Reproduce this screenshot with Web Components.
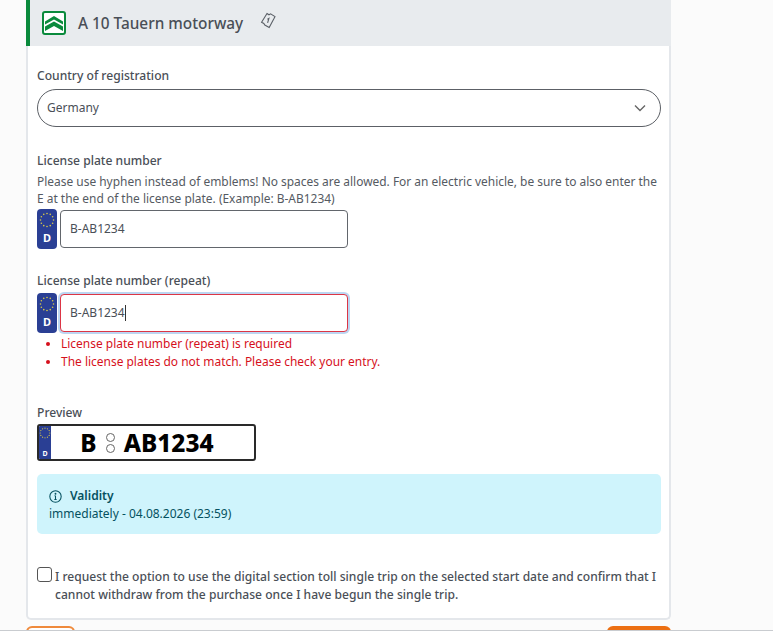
<!DOCTYPE html>
<html lang="en">
<head>
<meta charset="utf-8">
<title>A 10 Tauern motorway</title>
<style>
    html, body { margin: 0; height: 631px; overflow: hidden; background: #fbfbfb; }
    body { font: 12px/18px "Noto Sans", sans-serif; color: #4a4f57; }
</style>
</head>
<body>
<toll-page>
    <toll-card title="A 10 Tauern motorway">
        <form-field label="Country of registration" style="margin-bottom:24px">
            <country-select value="Germany"></country-select>
        </form-field>
        <form-field label="License plate number"
            hint="Please use hyphen instead of emblems! No spaces are allowed. For an electric vehicle, be sure to also enter the E at the end of the license plate. (Example: B-AB1234)"
            style="margin-bottom:22px">
            <plate-input value="B-AB1234"></plate-input>
        </form-field>
        <form-field label="License plate number (repeat)" style="margin-bottom:32px">
            <plate-input value="B-AB1234" invalid></plate-input>
            <error-list>
                <li>License plate number (repeat) is required</li>
                <li>The license plates do not match. Please check your entry.</li>
            </error-list>
        </form-field>
        <form-field label="Preview" style="margin-bottom:13px">
            <plate-preview left="B" right="AB1234"></plate-preview>
        </form-field>
        <info-box heading="Validity">immediately - 04.08.2026 (23:59)</info-box>
        <check-row>I request the option to use the digital section toll single trip on the selected start date and confirm that I cannot withdraw from the purchase once I have begun the single trip.</check-row>
    </toll-card>
</toll-page>

<script>
class TollPage extends HTMLElement {
    constructor() {
        super();
        this.attachShadow({ mode: 'open' }).innerHTML = `
<style>
    :host { display: block; height: 631px; box-sizing: border-box; border-bottom: 1px solid #c9ccd0; overflow: hidden; padding-left: 26px; }
    .col { width: 645px; }
    .actions { display: flex; justify-content: space-between; margin-top: 6px; }
    .btn { height: 30px; box-sizing: border-box; border-radius: 6px; }
    .back { width: 49px; background: #fff; border: 2px solid #ef8a3c; }
    .next { width: 64px; background: #ec6f12; }
</style>
<div class="col">
    <slot></slot>
    <div class="actions"><div class="btn back"></div><div class="btn next"></div></div>
</div>`;
    }
}
customElements.define('toll-page', TollPage);

class TollCard extends HTMLElement {
    constructor() {
        super();
        this.attachShadow({ mode: 'open' });
    }
    connectedCallback() {
        this.shadowRoot.innerHTML = `
<style>
    :host { display: block; background: #fff; box-sizing: border-box; height: 620px; border: solid #e4e7eb; border-width: 0 2px 2px 2px; border-radius: 0 0 5px 5px; }
    header { display: flex; align-items: center; height: 46px; background: #e8ebee; margin-left: -2px; margin-right: -2px; border-left: 4px solid #0a8a3c; box-sizing: border-box; padding-left: 12px; }
    h2 { margin: 0 0 0 12px; font-size: 15.35px; font-weight: 500; line-height: 22px; color: #4a4f57; }
    .ticket { margin-left: 16px; margin-top: -4px; }
    .body { padding: 20px 8px 0 9px; }
</style>
<header>
    <svg width="24" height="24" viewBox="0 0 24 24">
        <rect x="1" y="1" width="22" height="22" rx="2" fill="#fff" stroke="#0a8a3c" stroke-width="2"/>
        <path d="M3 10.5 12 5l9 5.5V20l-9-5-9 5z" fill="#0a8a3c"/>
        <path d="M3 13.5 12 8.5l9 5v2l-9-5-9 5z" fill="#fff"/>
    </svg>
    <h2>${this.getAttribute('title')}</h2>
    <svg class="ticket" width="18" height="20" viewBox="0 0 18 20" fill="none" stroke="#5a5f66" stroke-width="1.1">
        <path d="M8 2.5 10 3.8 11.6 2.8 16 5.6 15 7.6 10.2 16.5 5.8 14 4.8 12.4 2.6 11.2z"/>
        <path d="M8.4 8.2 9.9 7.4 8.6 11.8"/>
    </svg>
</header>
<div class="body"><slot></slot></div>`;
    }
}
customElements.define('toll-card', TollCard);

class FormField extends HTMLElement {
    constructor() {
        super();
        this.attachShadow({ mode: 'open' });
    }
    connectedCallback() {
        let hint = this.getAttribute('hint');
        this.shadowRoot.innerHTML = `
<style>
    :host { display: block; }
    label { display: block; font-size: 12.1px; font-weight: 500; line-height: 18px; padding-top: 1px; margin-bottom: 4px; color: #4a4f57; }
    p { margin: -1px 0 2px; line-height: 17px; font-size: 11.94px; color: #555a62; }
</style>
<label>${this.getAttribute('label')}</label>
${hint ? `<p>${hint}</p>` : ''}
<slot></slot>`;
    }
}
customElements.define('form-field', FormField);

class CountrySelect extends HTMLElement {
    constructor() {
        super();
        this.attachShadow({ mode: 'open' });
    }
    connectedCallback() {
        this.shadowRoot.innerHTML = `
<style>
    :host { display: flex; align-items: center; justify-content: space-between; height: 38px; box-sizing: border-box; border: 1px solid #5c6066; border-radius: 19px; background: #fff; padding: 0 13px 0 9px; font-size: 12px; color: #4a4f57; }
</style>
<span>${this.getAttribute('value')}</span>
<svg width="14" height="14" viewBox="0 0 14 14" fill="none" stroke="#666" stroke-width="1.4"><path d="M2 4.5 7 9.5l5-5"/></svg>`;
    }
}
customElements.define('country-select', CountrySelect);

// blue EU strip, the stars are a dotted circle
const euStars = (size, r) => {
    let dots = '';
    for (let i = 0; i < 12; i++) {
        let a = i * Math.PI / 6;
        dots += `<circle cx="${size / 2 + r * Math.cos(a)}" cy="${size / 2 + r * Math.sin(a)}" r="${size / 20}" fill="#d8c84a"/>`;
    }
    return `<svg width="${size}" height="${size}" viewBox="0 0 ${size} ${size}">${dots}</svg>`;
};

class PlateInput extends HTMLElement {
    constructor() {
        super();
        this.attachShadow({ mode: 'open' });
    }
    connectedCallback() {
        let invalid = this.hasAttribute('invalid');
        this.shadowRoot.innerHTML = `
<style>
    :host { display: flex; align-items: center; gap: 3px; height: 40px; }
    :host([invalid]) { margin-top: -1px; }
    .eu { width: 20px; height: 40px; box-sizing: border-box; background: #2a3f94; border-radius: 4px; display: flex; flex-direction: column; align-items: center; padding-top: 3px; color: #fff; font-size: 11px; font-weight: 700; line-height: 14px; }
    .eu span { margin-top: 3px; }
    .box { width: 288px; height: 38px; box-sizing: border-box; border: 1px solid #62666c; border-radius: 4px; background: #fff; padding: 0 9px; display: flex; align-items: center; font-size: 12px; color: #4a4f57; }
    .bad { border-color: #dc3545; box-shadow: 0 0 0 2px #bcd6f2; }
    i { display: ${invalid ? 'block' : 'none'}; width: 1px; height: 16px; background: #333; }
</style>
<div class="eu">${euStars(16, 6.5)}<span>D</span></div>
<div class="box ${invalid ? 'bad' : ''}">${this.getAttribute('value')}<i></i></div>`;
    }
}
customElements.define('plate-input', PlateInput);

class ErrorList extends HTMLElement {
    constructor() {
        super();
        this.attachShadow({ mode: 'open' }).innerHTML = `
<style>
    :host { display: block; margin-top: 2px; color: #d6101c; font-size: 11.96px; line-height: 18px; }
    ul { margin: 0; padding: 0 0 0 24px; }
</style>
<ul><slot></slot></ul>`;
    }
}
customElements.define('error-list', ErrorList);

class PlatePreview extends HTMLElement {
    constructor() {
        super();
        this.attachShadow({ mode: 'open' });
    }
    connectedCallback() {
        this.shadowRoot.innerHTML = `
<style>
    :host { display: flex; width: 219px; height: 37px; margin-top: -2px; box-sizing: border-box; border: 2px solid #2a2a2a; border-radius: 3px; background: #fff; overflow: hidden; }
    .eu { width: 12px; background: #2a3f94; color: #fff; font-size: 7px; font-weight: 700; line-height: 10px; display: flex; flex-direction: column; align-items: center; justify-content: space-between; padding: 1px 0 0; box-sizing: border-box; }
    .txt { flex: 1; display: flex; align-items: center; justify-content: center; gap: 9px; padding-right: 11px; color: #000; font-size: 24.4px; font-weight: 800; line-height: 30px; }
    .seal { display: flex; flex-direction: column; gap: 2px; }
    .seal b { display: block; width: 9px; height: 9px; box-sizing: border-box; border: 1px solid #666; border-radius: 50%; }
</style>
<div class="eu">${euStars(12, 4.8)}<span>D</span></div>
<div class="txt"><span>${this.getAttribute('left')}</span><div class="seal"><b></b><b></b></div><span>${this.getAttribute('right')}</span></div>`;
    }
}
customElements.define('plate-preview', PlatePreview);

class InfoBox extends HTMLElement {
    constructor() {
        super();
        this.attachShadow({ mode: 'open' });
    }
    connectedCallback() {
        this.shadowRoot.innerHTML = `
<style>
    :host { display: block; height: 60px; box-sizing: border-box; background: #cff4fc; border-radius: 5px; padding: 13px 12px; color: #055160; font-size: 12px; line-height: 18px; }
    .head { display: flex; align-items: center; gap: 8px; font-weight: 600; }
</style>
<div class="head">
    <svg width="13" height="13" viewBox="0 0 16 16" fill="none" stroke="#055160" stroke-width="1.3">
        <circle cx="8" cy="8" r="7"/>
        <path d="M8 7v4.6M6.6 11.8h2.8M6.8 7H8"/>
        <circle cx="8" cy="4.6" r=".5" fill="#055160"/>
    </svg>
    <span>${this.getAttribute('heading')}</span>
</div>
<div><slot></slot></div>`;
    }
}
customElements.define('info-box', InfoBox);

class CheckRow extends HTMLElement {
    constructor() {
        super();
        this.attachShadow({ mode: 'open' }).innerHTML = `
<style>
    :host { display: flex; gap: 3px; margin-top: 34px; font-size: 12.08px; font-weight: 500; line-height: 18px; color: #4a4f57; }
    .box { flex: none; width: 15px; height: 15px; box-sizing: border-box; border: 1px solid #555; border-radius: 3px; background: #fff; margin-top: -1px; }
</style>
<div class="box"></div>
<div><slot></slot></div>`;
    }
}
customElements.define('check-row', CheckRow);
</script>
</body>
</html>
